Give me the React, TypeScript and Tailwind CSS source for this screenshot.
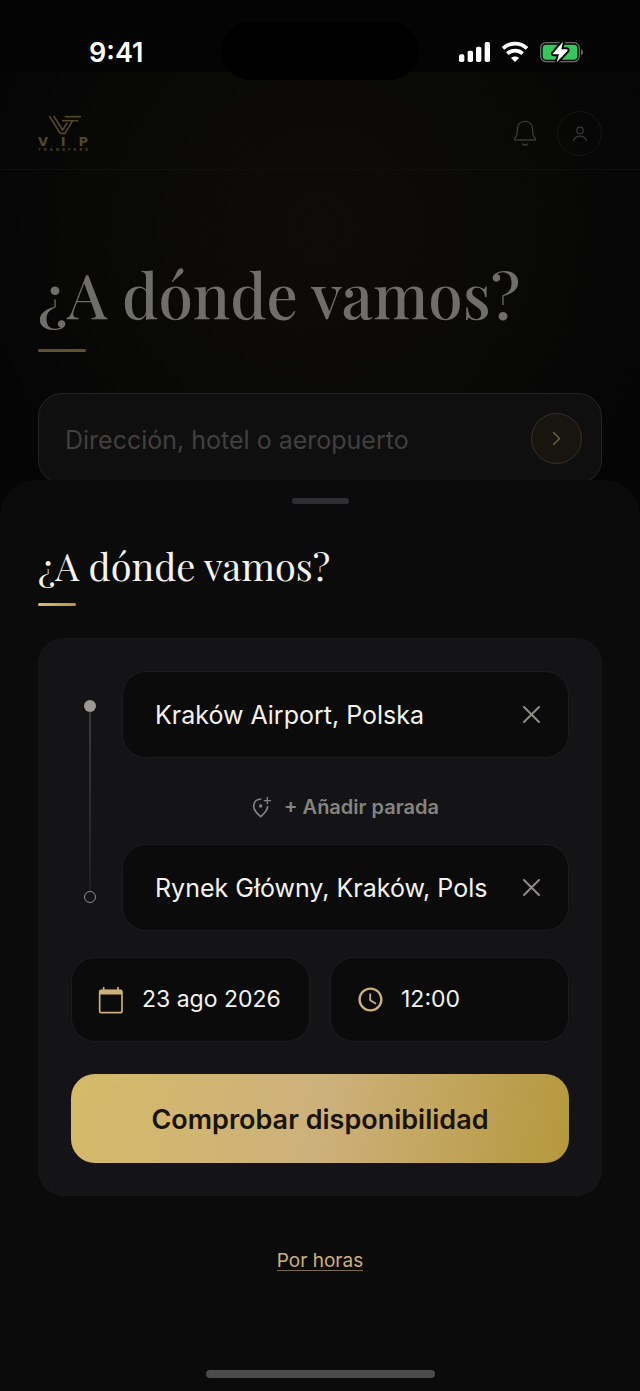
import { useState } from 'react';
import { MdAccessTime } from 'react-icons/md';

type PlaceFieldProps = {
  id: string;
  label: string;
  value: string;
  onChange: (value: string) => void;
};

function StatusIcons() {
  return (
    <svg width="126" height="24" viewBox="0 0 378 72" aria-hidden="true">
      {/* Signal bars */}
      <g fill="#fff">
        <rect x="3" y="43" width="16" height="23" rx="5" />
        <rect x="29" y="32" width="16" height="34" rx="5" />
        <rect x="54" y="20" width="16" height="46" rx="5" />
        <rect x="80" y="6" width="16" height="60" rx="5" />
      </g>
      {/* Wifi */}
      <g fill="none" stroke="#fff" strokeWidth="11">
        <path d="M135 25C155 6 187 6 207 25" />
        <path d="M148 41C161 29 181 29 194 41" />
      </g>
      <path d="M159 54c7-6 17-6 24 0l-12 12z" fill="#fff" />
      {/* Battery */}
      <rect x="248" y="8" width="116" height="57" rx="17" fill="none" stroke="#6b6b6b" strokeWidth="4" />
      <path d="M369 28c8 3 8 15 0 18z" fill="#6b6b6b" />
      <rect x="254" y="14" width="104" height="45" rx="11" fill="#34c759" />
      <path
        d="M315 5 286 39c-2 2-1 4 2 4h15l-7 24 32-34c2-2 1-5-2-5h-16z"
        fill="#fff"
        stroke="#040404"
        strokeWidth="12"
        strokeLinejoin="round"
        paintOrder="stroke"
      />
    </svg>
  );
}

function Logo() {
  return (
    <a href="#inicio" aria-label="VIP Transfers" className="flex w-[50px] flex-col items-stretch text-[#54472b]">
      <svg width="34" height="20" viewBox="0 0 102 60" className="ml-2.5" fill="none" stroke="currentColor" strokeWidth="5" aria-hidden="true">
        <path d="M4 3 37 55H51L74 17" />
        <path d="M17 3 44 45 58 23" />
        <path d="M50 5H99" />
        <path d="M42 17H91" />
      </svg>
      <span aria-hidden="true" className="flex justify-between font-['DejaVu_Sans',sans-serif] text-[13px] leading-[13px] font-bold">
        <span>V</span>
        <span>I</span>
        <span>P</span>
      </span>
      <span aria-hidden="true" className="flex justify-between font-['Inter'] text-[4px] leading-[4px] font-bold">
        {'TRANSFERS'.split('').map((letter, i) => (
          <span key={i}>{letter}</span>
        ))}
      </span>
    </a>
  );
}

function BellIcon() {
  return (
    <svg width="24" height="27" viewBox="0 0 72 81" fill="none" stroke="currentColor" strokeWidth="4" strokeLinecap="round" strokeLinejoin="round" aria-hidden="true">
      <path d="M36 4C21 4 13 15 13 29V36C13 46 9 51 5 56C4 58 5 60 7 60H65C67 60 68 58 67 56C63 51 59 46 59 36V29C59 15 51 4 36 4Z" />
      <path d="M29 72C32 76 40 76 43 72" />
    </svg>
  );
}

function PersonIcon() {
  return (
    <svg width="16" height="16" viewBox="0 0 54 54" fill="none" stroke="currentColor" strokeWidth="4" strokeLinecap="round" aria-hidden="true">
      <circle cx="27" cy="15" r="11" />
      <path d="M5 50C12 29 42 29 49 50" />
    </svg>
  );
}

function CloseIcon() {
  return (
    <svg width="17" height="17" viewBox="0 0 17 17" fill="none" stroke="currentColor" strokeWidth="2" strokeLinecap="round" aria-hidden="true">
      <path d="M1 1 16 16M16 1 1 16" />
    </svg>
  );
}

function AddPinIcon() {
  return (
    <svg width="20" height="22" viewBox="0 0 60 66" fill="none" stroke="currentColor" strokeWidth="5" aria-hidden="true">
      <path d="M28 9C13 9 5 19 5 31C5 41 13 51 26 62C39 51 47 41 47 30" strokeLinejoin="round" />
      <path d="M46 3V25M35 14H57" strokeWidth="4" />
      <circle cx="26" cy="30" r="5" fill="currentColor" stroke="none" />
    </svg>
  );
}

function CalendarIcon() {
  return (
    <svg width="26" height="28" viewBox="0 0 78 84" fill="none" stroke="currentColor" strokeWidth="5" aria-hidden="true">
      <path d="M17 3V14M60 3V14" />
      <rect x="5" y="13" width="67" height="67" rx="5" />
      <path d="M5 18.5H72" strokeWidth="14" />
    </svg>
  );
}

function PlaceField({ id, label, value, onChange }: PlaceFieldProps) {
  return (
    <div className="flex h-[87px] items-center gap-9 rounded-3xl border border-[#1c1c1e] bg-[#0b0b0b] pr-7 pl-8">
      <input
        id={id}
        type="text"
        aria-label={label}
        value={value}
        onChange={e => onChange(e.target.value)}
        className="h-12 min-w-0 flex-1 bg-transparent text-[25px] text-[#f3f2ee] outline-none"
      />
      <button type="button" aria-label={`Borrar ${label}`} onClick={() => onChange('')} className="text-[#8d8c89]">
        <CloseIcon />
      </button>
    </div>
  );
}

export default function App() {
  const [search, setSearch] = useState('');
  const [origin, setOrigin] = useState('Kraków Airport, Polska');
  const [destination, setDestination] = useState('Rynek Główny, Kraków, Polska');

  return (
    <div className="relative flex min-h-screen flex-col bg-[#050505] font-['Inter',sans-serif]">
      {/* Status bar */}
      <div className="flex h-[72px] items-center justify-between bg-[#040404] pt-8 pr-14 pl-[89px]">
        <span className="pt-0.5 text-[27px] leading-8 font-semibold text-white">9:41</span>
        <StatusIcons />
      </div>
      <div className="absolute top-[22px] left-1/2 h-[58px] w-[198px] -translate-x-1/2 rounded-full bg-black" />

      {/* Dimmed home screen behind the sheet */}
      <div className="bg-[radial-gradient(circle_at_50%_35%,#0e0c09_0%,#090908_45%,#050505_85%)] pb-8">
        <header className="flex items-center justify-between border-b border-[#10100e] px-[38px] pt-[39px] pb-[13px]">
          <Logo />
          <div className="flex items-center gap-5 text-[#3b3a38]">
            <button type="button" aria-label="Notificaciones">
              <BellIcon />
            </button>
            <button type="button" aria-label="Perfil" className="flex size-[45px] items-center justify-center rounded-full border border-[#161614]">
              <PersonIcon />
            </button>
          </div>
        </header>

        <div className="px-[38px] pt-[84px]">
          <h1 className="font-['Playfair_Display','Liberation_Serif',serif] text-[62px] leading-[80px] font-medium text-[#706e6c]">
            ¿A dónde vamos?
          </h1>
          <div className="mt-[15px] h-[3px] w-12 rounded-full bg-[#5f5230]" />
          <form
            onSubmit={e => e.preventDefault()}
            className="mt-[41px] flex h-[91px] items-center rounded-3xl border border-[#262521] bg-[#0f0f0f] pr-[19px] pl-[26px]"
          >
            <input
              id="search"
              type="text"
              aria-label="Destino"
              value={search}
              onChange={e => setSearch(e.target.value)}
              placeholder="Dirección, hotel o aeropuerto"
              className="h-12 min-w-0 flex-1 bg-transparent pt-0.5 text-[25px] text-[#706e6c] outline-none placeholder:text-[#41403e]"
            />
            <button type="submit" aria-label="Buscar" className="flex size-[51px] items-center justify-center rounded-full border border-[#35302a] bg-[#181510] text-[#6d5f3c]">
              <svg width="9" height="15" viewBox="0 0 9 15" fill="none" stroke="currentColor" strokeWidth="1.5" strokeLinecap="round" strokeLinejoin="round" aria-hidden="true">
                <path d="M1.5 1.5 7.5 7.5 1.5 13.5" />
              </svg>
            </button>
          </form>
        </div>
      </div>

      {/* Booking sheet */}
      <section className="relative -mt-9 flex flex-1 flex-col rounded-t-[36px] bg-[#0b0b0b] px-[38px]">
        <div className="mx-auto mt-[18px] h-1.5 w-[57px] rounded-full bg-[#2f2f31]" />
        <h2 className="mt-[38px] font-['Playfair_Display','Liberation_Serif',serif] text-[38px] leading-[48px] text-[#f3f2ee]">
          ¿A dónde vamos?
        </h2>
        <div className="mt-[13px] h-[3px] w-[38px] rounded-full bg-linear-to-r from-[#d9bd76] to-[#b5963e]" />

        <div className="mt-8 rounded-[26px] border border-[#171719] bg-[#141416] p-8">
          <div className="flex gap-[13px]">
            {/* Route line */}
            <div className="flex w-[38px] shrink-0 flex-col items-center pt-[29px] pb-7">
              <span className="size-3 rounded-full bg-[#9b9994]" />
              <span className="w-0.5 flex-1 bg-linear-to-b from-[#3a3a3b] to-[#202022]" />
              <span className="size-3 rounded-full border border-[#8d8c89]" />
            </div>
            <div className="flex min-w-0 flex-1 flex-col">
              <PlaceField id="origin" label="Origen" value={origin} onChange={setOrigin} />
              <button type="button" className="flex h-[86px] items-center justify-center gap-3 pt-3 text-[20px] font-semibold text-[#858482]">
                <AddPinIcon />
                + Añadir parada
              </button>
              <PlaceField id="destination" label="Destino" value={destination} onChange={setDestination} />
            </div>
          </div>

          <div className="mt-[26px] grid grid-cols-2 gap-5 text-[23px] text-[#f3f2ee]">
            <button type="button" className="flex h-[85px] items-center gap-[18px] rounded-3xl border border-[#1c1c1e] bg-[#0b0b0b] pl-[26px] whitespace-nowrap">
              <span className="text-[#cdb07a]">
                <CalendarIcon />
              </span>
              23 ago 2026
            </button>
            <button type="button" className="flex h-[85px] items-center gap-4 rounded-3xl border border-[#1c1c1e] bg-[#0b0b0b] pl-[25px] whitespace-nowrap">
              <MdAccessTime size={29} color="#cdb07a" />
              12:00
            </button>
          </div>

          <button
            type="button"
            className="mt-8 h-[89px] w-full rounded-3xl bg-[linear-gradient(100deg,#d4ba68_0%,#cdb17c_50%,#b5983c_100%)] pt-1 text-[27px] font-semibold text-[#1a1406]"
          >
            Comprobar disponibilidad
          </button>
        </div>

        <a href="#por-horas" className="mx-auto mt-14 border-b border-[#7d6c48] text-[19px] leading-[18px] text-[#cdb07a]">
          Por horas
        </a>
        <div className="mx-auto mt-auto mb-[13px] h-2 w-[229px] rounded-full bg-[#4b4b4b]" />
      </section>
    </div>
  );
}
